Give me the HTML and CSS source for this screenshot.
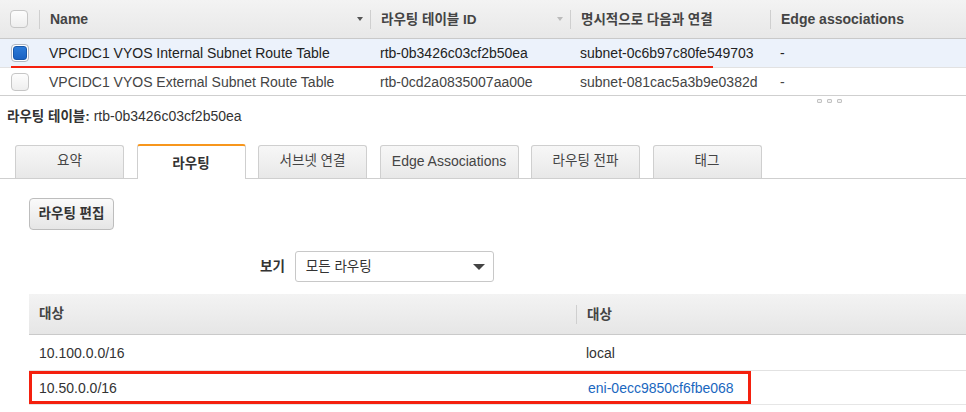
FILE: index.html
```html
<!DOCTYPE html>
<html lang="ko">
<head>
<meta charset="utf-8">
<title>라우팅 테이블</title>
<link rel="stylesheet" href="styles.css">
</head>
<body>
<div class="grid">
  <div class="grow ghead">
    <div class="gc gc-check"><span class="cb"></span></div>
    <div class="gc gc-name hc"><span>Name</span><span class="sort"></span></div>
    <div class="gc gc-id hc"><span>라우팅 테이블 ID</span><span class="sort light"></span></div>
    <div class="gc gc-assoc hc"><span>명시적으로 다음과 연결</span></div>
    <div class="gc gc-edge hc"><span>Edge associations</span></div>
  </div>
  <div class="grow gbody selected">
    <div class="gc gc-check"><span class="cb checked"><span class="cb-fill"></span></span></div>
    <div class="gc gc-name bc">VPCIDC1 VYOS Internal Subnet Route Table</div>
    <div class="gc gc-id bc">rtb-0b3426c03cf2b50ea</div>
    <div class="gc gc-assoc bc">subnet-0c6b97c80fe549703</div>
    <div class="gc gc-edge bc">-</div>
    <span class="underline-mark"></span>
  </div>
  <div class="grow gbody last">
    <div class="gc gc-check"><span class="cb"></span></div>
    <div class="gc gc-name bc">VPCIDC1 VYOS External Subnet Route Table</div>
    <div class="gc gc-id bc">rtb-0cd2a0835007aa00e</div>
    <div class="gc gc-assoc bc">subnet-081cac5a3b9e0382d</div>
    <div class="gc gc-edge bc">-</div>
  </div>
</div>
<div class="handle"><span class="hd"></span><span class="hd"></span><span class="hd"></span></div>

<div class="title"><b class="ko">라우팅 테이블:</b> rtb-0b3426c03cf2b50ea</div>

<div class="tabs">
  <div class="tab ko">요약</div>
  <div class="tab active ko">라우팅</div>
  <div class="tab ko">서브넷 연결</div>
  <div class="tab wide">Edge Associations</div>
  <div class="tab ko">라우팅 전파</div>
  <div class="tab ko">태그</div>
</div>

<div class="pane">
  <div class="btn ko">라우팅 편집</div>
  <div class="filter">
    <span class="filter-label ko">보기</span>
    <div class="select"><span class="ko">모든 라우팅</span><span class="caret"></span></div>
  </div>
  <div class="rt">
    <div class="rt-row rt-head">
      <div class="rt-c ko">대상</div>
      <div class="rt-c rt-sep ko">대상</div>
    </div>
    <div class="rt-row rt-body first">
      <div class="rt-c">10.100.0.0/16</div>
      <div class="rt-c">local</div>
    </div>
    <div class="rt-row rt-body second">
      <div class="rt-c">10.50.0.0/16</div>
      <div class="rt-c"><span class="link">eni-0ecc9850cf6fbe068</span></div>
      <span class="box-mark"></span>
    </div>
  </div>
</div>
</body>
</html>
```

FILE: styles.css
```css
* { box-sizing: border-box; }
html, body { margin: 0; padding: 0; }
body {
  width: 966px;
  height: 412px;
  overflow: hidden;
  background: #fff;
  color: #333;
  font-family: "Liberation Sans", "Noto Sans CJK KR", sans-serif;
  font-size: 14px;
  line-height: 20px;
}
.ko { font-size: 13.5px; }

/* top grid */
.grow { display: flex; align-items: center; }
.ghead {
  height: 39px;
  background: linear-gradient(#f3f3f3, #e8e8e8);
  border-bottom: 1px solid #c9c9c9;
}
.gbody { height: 29px; border-bottom: 1px solid #e2e2e2; color: #444; }
.gbody.selected { background: #ecf2fb; color: #222; position: relative; }
.gbody.last { border-bottom: 1px solid #cfcfcf; height: 28px; }
.gc { flex: none; white-space: nowrap; }
.gc-check { width: 39px; padding-left: 10px; display: flex; align-items: center; }
.gbody .gc-check { padding-left: 11px; }
.gc-name { width: 331px; }
.gc-id { width: 200px; }
.gc-assoc { width: 200px; }
.gc-edge { width: 196px; }
.hc {
  height: 19px;
  border-left: 1px solid #cfcfcf;
  padding-left: 10px;
  padding-right: 7px;
  font-weight: bold;
  color: #444;
  display: flex;
  align-items: center;
  justify-content: space-between;
  line-height: 19px;
}
.hc span { font-size: 14px; }
.gc-id.hc span:first-child, .gc-assoc.hc span { font-size: 13.5px; }
.bc { padding-left: 10px; }
.sort {
  width: 0; height: 0;
  border-left: 3.5px solid transparent;
  border-right: 3.5px solid transparent;
  border-top: 4px solid #555;
}
.sort.light { border-top-color: #bbb; }
.cb {
  width: 18px; height: 18px;
  border: 1px solid #c6c6c6;
  border-radius: 4px;
  background: linear-gradient(#fdfdfd, #eeeeee);
  display: flex;
  align-items: center;
  justify-content: center;
}
.cb.checked { border-color: #b0b6c0; background: #fff; }
.cb-fill {
  width: 14px; height: 14px;
  border-radius: 3px;
  background: linear-gradient(#2b7ad8, #1a62c2);
  border: 1px solid #1756a8;
}
.underline-mark {
  position: absolute;
  left: 11px;
  top: 27px;
  width: 702px;
  height: 2px;
  background: #f4200e;
}

/* resize handle */
.handle {
  display: flex;
  justify-content: flex-end;
  gap: 5px;
  padding-right: 124px;
  padding-top: 3px;
  height: 10px;
}
.hd {
  width: 5px; height: 4px;
  border: 1px solid #c2c2c2;
  background: #f2f2f2;
  border-radius: 1px;
}

/* title */
.title {
  padding-left: 7px;
  height: 20px;
  color: #333;
}
.title b { font-weight: bold; }

/* tabs */
.tabs {
  margin-top: 18px;
  height: 35px;
  display: flex;
  align-items: flex-end;
  gap: 12.5px;
  padding-left: 15px;
  border-bottom: 1px solid #cfcfcf;
}
.tab {
  width: 109px;
  height: 33px;
  border: 1px solid #cfcfcf;
  border-bottom: none;
  border-radius: 3px 3px 0 0;
  background: linear-gradient(#f7f7f7, #e8e8e8);
  color: #444;
  display: flex;
  align-items: center;
  justify-content: center;
  padding-bottom: 3px;
}
.tab.wide { width: 139px; font-size: 14px; }
.tab.active {
  height: 35px;
  margin-bottom: -1px;
  background: #fff;
  border-top: 2px solid #f7961c;
  font-weight: bold;
  color: #333;
  padding-bottom: 0;
  padding-top: 2px;
}

/* pane */
.pane { padding-left: 29px; }
.btn {
  margin-top: 19px;
  width: 85px;
  height: 32px;
  border: 1px solid #bdbdbd;
  border-radius: 4px;
  background: linear-gradient(#fafafa, #e6e6e6);
  font-weight: bold;
  color: #333;
  display: flex;
  align-items: center;
  justify-content: center;
}
.filter {
  margin-top: 21px;
  margin-left: 231px;
  display: flex;
  align-items: center;
  gap: 10px;
}
.filter-label { font-weight: bold; color: #333; }
.select {
  width: 199px;
  height: 31px;
  border: 1px solid #c8c8c8;
  border-radius: 3px;
  padding: 0 8px 0 10px;
  display: flex;
  align-items: center;
  justify-content: space-between;
  color: #333;
}
.caret {
  width: 0; height: 0;
  border-left: 6px solid transparent;
  border-right: 6px solid transparent;
  border-top: 6px solid #444;
}

/* route table */
.rt { margin-top: 12px; }
.rt-row {
  display: grid;
  grid-template-columns: 547px 1fr;
  align-items: center;
}
.rt-head {
  height: 41px;
  background: linear-gradient(#f3f3f3, #e6e6e6);
  border-bottom: 1px solid #cacaca;
  font-weight: bold;
  color: #444;
}
.rt-c { padding-left: 10px; white-space: nowrap; }
.rt-sep {
  border-left: 1px solid #cfcfcf;
  height: 19px;
  line-height: 19px;
}
.rt-body { color: #333; }
.rt-body.first { height: 36px; border-bottom: 1px solid #e2e2e2; }
.rt-body.second { height: 34px; position: relative; border-bottom: 1px solid #e6e6e6; }
.rt-body.second .rt-c:last-of-type { padding-left: 12px; }
.link { color: #1a67c0; }
.box-mark {
  position: absolute;
  left: 0;
  top: 0;
  width: 722px;
  height: 33px;
  border: 3px solid #f4200e;
}
```
